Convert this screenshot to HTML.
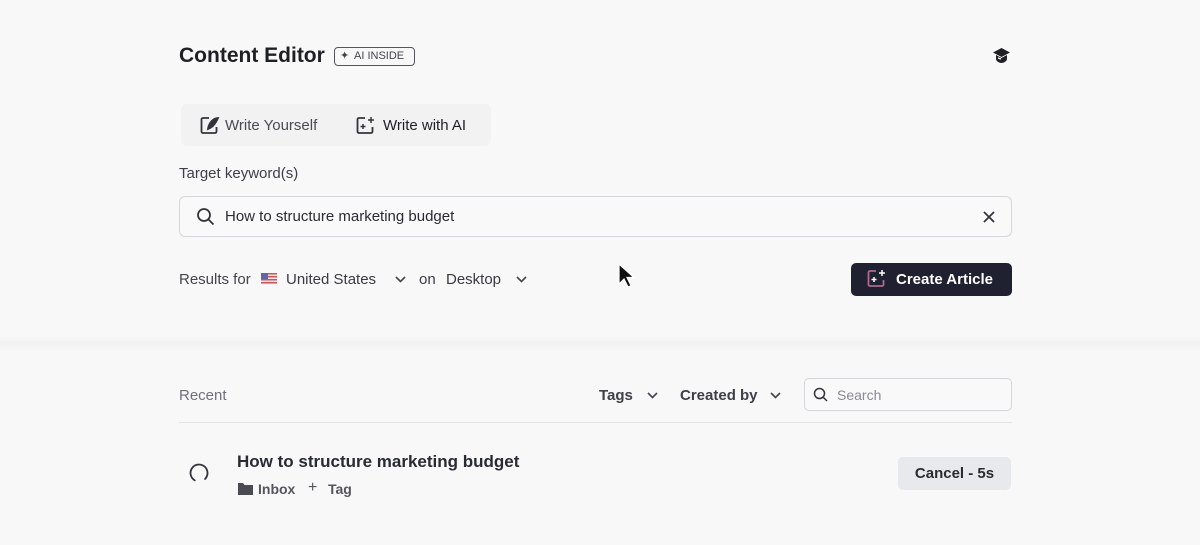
<!DOCTYPE html>
<html><head><style>
*{box-sizing:border-box;margin:0;padding:0}
body{width:1200px;height:545px;background:#f8f8f9;font-family:"Liberation Sans",sans-serif;color:#2a2b30;position:relative;overflow:hidden}
.a{position:absolute}
.sep{left:0;top:336px;width:1200px;height:16px;background:linear-gradient(#f8f8f9,#f1f1f2 40%,#f8f8f9)}
</style></head><body>
<div class="a" style="left:179px;top:44px;font-size:21px;font-weight:bold;color:#1f2024">Content Editor</div>
<div class="a" style="left:334px;top:47px;width:81px;height:19px;border:1.5px solid #55565c;border-radius:4px;font-size:11px;color:#44454a;line-height:16px;padding-left:19px">AI INSIDE<span class="a" style="left:5px;top:0;font-size:11px">✦</span></div>
<svg class="a" style="left:992px;top:47px" width="19" height="18" viewBox="0 0 19 18"><path d="M9.5 1L18 5.5 9.5 10 1 5.5Z" fill="#1f2024"/><path d="M4 8v4c0 2 3 4 5.5 4s5.5-2 5.5-4V8l-5.5 3z" fill="#1f2024"/><path d="M6 11l3 1" stroke="#fff" stroke-width="1.2"/></svg>
<div class="a" style="left:181px;top:104px;width:310px;height:42px;background:#f2f2f3;border-radius:6px"></div>
<svg class="a" style="left:200px;top:116px" width="20" height="19" viewBox="0 0 20 19" fill="none" stroke="#33343a" stroke-width="1.8"><path d="M9 2H3a1.5 1.5 0 0 0-1.5 1.5v12A1.5 1.5 0 0 0 3 17h12a1.5 1.5 0 0 0 1.5-1.5V11"/><path d="M18 2c-4 0-9 4-10 11 3-1 7-4 10-11z" fill="#33343a"/></svg>
<div class="a" style="left:225px;top:117px;font-size:15px;color:#4a4b51">Write Yourself</div>
<svg class="a" style="left:356px;top:116px" width="20" height="19" viewBox="0 0 20 19" fill="none" stroke="#33343a" stroke-width="1.8"><path d="M9 2H3a1.5 1.5 0 0 0-1.5 1.5v12A1.5 1.5 0 0 0 3 17h12a1.5 1.5 0 0 0 1.5-1.5V11"/><path d="M15 1v6M12 4h6M7 8v5M4.5 10.5h5" stroke-width="1.5"/></svg>
<div class="a" style="left:383px;top:117px;font-size:15px;color:#1f2024">Write with AI</div>
<div class="a" style="left:179px;top:165px;font-size:15px;color:#3f4046">Target keyword(s)</div>
<div class="a" style="left:179px;top:196px;width:833px;height:41px;border:1px solid #d6d7da;border-radius:6px;background:#f9f9fa"></div>
<svg class="a" style="left:196px;top:207px" width="19" height="19" viewBox="0 0 19 19" fill="none" stroke="#33343a" stroke-width="1.8"><circle cx="8" cy="8" r="6"/><path d="M12.5 12.5l5 5"/></svg>
<div class="a" style="left:225px;top:208px;font-size:15px;color:#2a2b30">How to structure marketing budget</div>
<svg class="a" style="left:983px;top:211px" width="12" height="12" viewBox="0 0 12 12" stroke="#33343a" stroke-width="1.8"><path d="M1 1l10 10M11 1L1 11"/></svg>
<div class="a" style="left:179px;top:271px;font-size:15px;color:#44454b">Results for</div>
<div class="a" style="left:261px;top:273px;width:16px;height:11px;background:repeating-linear-gradient(#d0535b 0 1.5px,#f2e8ea 1.5px 3px)"><div style="width:7px;height:6px;background:#5b67a8"></div></div>
<div class="a" style="left:286px;top:271px;font-size:15px;color:#3a3b41">United States</div>
<svg class="a" style="left:395px;top:276px" width="11" height="7" viewBox="0 0 11 7" fill="none" stroke="#44454b" stroke-width="1.6"><path d="M1 1l4.5 4.5L10 1"/></svg>
<div class="a" style="left:419px;top:271px;font-size:15px;color:#3a3b41">on</div>
<div class="a" style="left:446px;top:271px;font-size:15px;color:#3a3b41">Desktop</div>
<svg class="a" style="left:516px;top:276px" width="11" height="7" viewBox="0 0 11 7" fill="none" stroke="#44454b" stroke-width="1.6"><path d="M1 1l4.5 4.5L10 1"/></svg>
<svg class="a" style="left:617px;top:263px" width="18" height="26" viewBox="0 0 18 26"><path d="M2 1v20l5-5 4 8 3-1.5-4-8h7z" fill="#111" stroke="#fff" stroke-width="1.2"/></svg>
<div class="a" style="left:851px;top:263px;width:161px;height:33px;background:#1f2130;border-radius:5px"></div>
<svg class="a" style="left:867px;top:269px" width="21" height="20" viewBox="0 0 21 20" fill="none" stroke="#b06a8e" stroke-width="1.8"><path d="M9 2H3a1.5 1.5 0 0 0-1.5 1.5v12A1.5 1.5 0 0 0 3 17h12a1.5 1.5 0 0 0 1.5-1.5V11"/><path d="M15 1v6M12 4h6M7 8v5M4.5 10.5h5" stroke="#fff" stroke-width="1.5"/></svg>
<div class="a" style="left:896px;top:271px;font-size:15px;color:#fff;font-weight:bold">Create Article</div>
<div class="a sep"></div>
<div class="a" style="left:179px;top:387px;font-size:15px;color:#707177">Recent</div>
<div class="a" style="left:599px;top:387px;font-size:15px;color:#3f4046;font-weight:bold">Tags</div>
<svg class="a" style="left:647px;top:392px" width="11" height="7" viewBox="0 0 11 7" fill="none" stroke="#44454b" stroke-width="1.6"><path d="M1 1l4.5 4.5L10 1"/></svg>
<div class="a" style="left:680px;top:387px;font-size:15px;color:#3f4046;font-weight:bold">Created by</div>
<svg class="a" style="left:770px;top:392px" width="11" height="7" viewBox="0 0 11 7" fill="none" stroke="#44454b" stroke-width="1.6"><path d="M1 1l4.5 4.5L10 1"/></svg>
<div class="a" style="left:804px;top:378px;width:208px;height:33px;border:1px solid #d6d7da;border-radius:5px;background:#f9f9fa"></div>
<svg class="a" style="left:813px;top:387px" width="15" height="15" viewBox="0 0 15 15" fill="none" stroke="#33343a" stroke-width="1.5"><circle cx="6.5" cy="6.5" r="5"/><path d="M10 10l4 4"/></svg>
<div class="a" style="left:837px;top:387px;font-size:14px;color:#8a8b90">Search</div>
<div class="a" style="left:179px;top:422px;width:833px;height:1px;background:#e4e4e6"></div>
<svg class="a" style="left:188px;top:462px" width="22" height="22" viewBox="0 0 22 22"><circle cx="11" cy="11" r="8.5" fill="none" stroke="#33343a" stroke-width="1.8" stroke-linecap="round" stroke-dasharray="42 11.4" transform="rotate(120 11 11)"/></svg>
<div class="a" style="left:237px;top:452px;font-size:17px;font-weight:bold;color:#2a2b30">How to structure marketing budget</div>
<svg class="a" style="left:238px;top:482px" width="15" height="13" viewBox="0 0 15 13"><path d="M0 1h5l1.5 2H15v10H0z" fill="#4a4b51"/></svg>
<div class="a" style="left:258px;top:481px;font-size:14px;color:#55565c;font-weight:bold">Inbox</div>
<div class="a" style="left:308px;top:479px;font-size:16px;color:#55565c">+</div>
<div class="a" style="left:328px;top:481px;font-size:14px;color:#55565c;font-weight:bold">Tag</div>
<div class="a" style="left:898px;top:457px;width:113px;height:33px;background:#e8e9ed;border-radius:5px;font-size:15px;font-weight:bold;color:#2a2b30;line-height:33px;text-align:center">Cancel - 5s</div>
</body></html>
